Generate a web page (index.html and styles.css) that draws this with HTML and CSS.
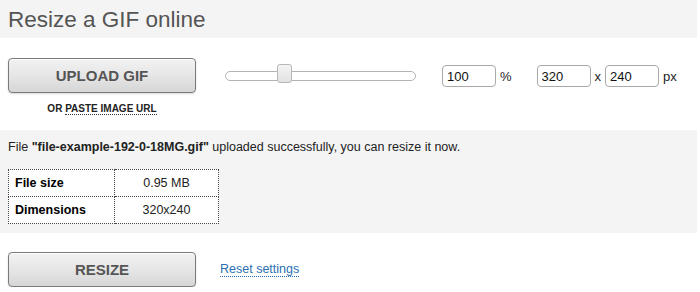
FILE: index.html
```html
<!DOCTYPE html>
<html lang="en">
<head>
  <meta charset="UTF-8">
  <title>Resize a GIF online</title>
  <link rel="stylesheet" href="styles.css">
</head>
<body>

  <div class="page">
    <h1 class="title">Resize a GIF online</h1>

    <div class="controls">
      <div class="upload">
        <button class="btn">UPLOAD GIF</button>
        <a class="paste">OR <span>PASTE IMAGE URL</span></a>
      </div>

      <div class="slider">
        <div class="track"></div>
        <div class="thumb"></div>
      </div>

      <div class="field">
        <input type="text" value="100"> <span>%</span>
      </div>

      <div class="field dims">
        <input type="text" value="320"> <span>x</span>
        <input type="text" value="240"> <span>px</span>
      </div>
    </div>

    <div class="info">
      <p class="msg">File <b>"file-example-192-0-18MG.gif"</b> uploaded successfully, you can resize it now.</p>
      <table class="stats">
        <tr><th>File size</th><td>0.95 MB</td></tr>
        <tr><th>Dimensions</th><td>320x240</td></tr>
      </table>
    </div>

    <div class="actions">
      <button class="btn">RESIZE</button>
      <a class="reset">Reset settings</a>
    </div>
  </div>

</body>
</html>
```

FILE: styles.css
```css
body {
  margin: 0;
  font-family: "Liberation Sans", Arial, sans-serif;
  font-size: 12px;
  color: #000;
  background-color: #fff;
}

.page {
  width: 697px;
}

.title {
  margin: 0;
  height: 38px;
  padding: 0 0 0 8px;
  background-color: #f4f4f4;
  font-size: 22.5px;
  font-weight: normal;
  line-height: 40px;
  color: #555;
}

.controls {
  display: flex;
  align-items: flex-start;
  height: 92px;
  padding: 20px 0 0 8px;
  box-sizing: border-box;
}

.btn {
  display: block;
  width: 188px;
  height: 35px;
  border: 1px solid #7a7a7a;
  border-radius: 4px;
  background: linear-gradient(#f2f2f2, #e6e6e6 50%, #d6d6d6);
  box-shadow: inset 0 1px 0 #fff, 0 1px 2px rgba(0,0,0,0.15);
  font-family: inherit;
  font-size: 15px;
  font-weight: bold;
  color: #555;
  cursor: pointer;
}

.upload {
  width: 188px;
  text-align: center;
}

.paste {
  display: inline-block;
  margin-top: 10px;
  font-size: 10px;
  font-weight: bold;
  color: #222;
}

.paste span {
  border-bottom: 1px dotted #333;
}

.slider {
  position: relative;
  width: 191px;
  height: 20px;
  margin: 8px 0 0 29px;
}

.track {
  margin-top: 5px;
  height: 8px;
  border: 1px solid #b3b3b3;
  border-radius: 5px;
  background-color: #fff;
}

.thumb {
  position: absolute;
  left: 52px;
  top: -2px;
  width: 13px;
  height: 17px;
  border: 1px solid #b8b8b8;
  border-radius: 3px;
  background: linear-gradient(#f4f4f4, #e2e2e2);
}

.field {
  display: flex;
  align-items: center;
  margin-top: 7px;
  font-size: 13px;
  color: #222;
}

.field input {
  width: 44px;
  height: 20px;
  padding: 0 4px;
  border: 1px solid #a9a9a9;
  border-radius: 4px;
  font-family: inherit;
  font-size: 13px;
  color: #111;
}

.field span {
  margin: 0 4px 0 4px;
}

.field:nth-child(3) {
  margin-left: 26px;
}

.dims {
  margin-left: 21px;
}

.info {
  background-color: #f4f4f4;
  padding: 10px 0 8px 8px;
  height: 103px;
  box-sizing: border-box;
}

.msg {
  margin: 0 0 15px 0;
  font-size: 12.5px;
  color: #222;
}

.stats {
  border-collapse: collapse;
  background-color: #fff;
  font-size: 12.5px;
}

.stats th, .stats td {
  border: 1px dotted #444;
  height: 26px;
  padding: 0 6px;
}

.stats th {
  width: 93px;
  text-align: left;
}

.stats td {
  width: 91px;
  text-align: center;
  color: #222;
}

.actions {
  display: flex;
  align-items: center;
  padding: 19px 0 0 8px;
}

.reset {
  margin-left: 24px;
  font-size: 12.5px;
  color: #2a6fb3;
  border-bottom: 1px dotted #2a6fb3;
  cursor: pointer;
}
```
